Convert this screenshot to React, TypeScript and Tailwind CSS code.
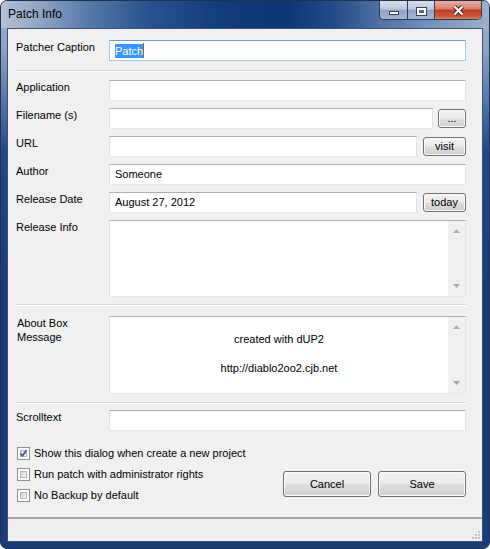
import type { ReactNode } from 'react';

function TextBox({
  className = '',
  focused = false,
  children,
}: {
  className?: string;
  focused?: boolean;
  children?: ReactNode;
}) {
  const border = focused
    ? 'border-[#a6c8e6] border-t-[#6f9ccb]'
    : 'border-[#e2e3ea] border-t-[#abadb3] border-b-[#e3e9ef]';
  return (
    <div className={`flex h-[21px] flex-1 items-center border bg-white pl-[5px] ${border} ${className}`}>
      {children}
    </div>
  );
}

function Button({ className = '', children }: { className?: string; children: ReactNode }) {
  return (
    <div
      className={`flex shrink-0 items-center justify-center rounded-[3px] border border-[#707070] bg-[linear-gradient(180deg,#f2f2f2_0%,#ebebeb_48%,#dddddd_52%,#cfcfcf_100%)] shadow-[inset_0_0_0_1px_#fbfbfb] leading-[13px] ${className}`}
    >
      {children}
    </div>
  );
}

function Row({ label, className = '', children }: { label: ReactNode; className?: string; children: ReactNode }) {
  return (
    <div className={`flex ${className}`}>
      <div className="w-[93px] shrink-0 leading-[14px]">{label}</div>
      <div className="flex flex-1">{children}</div>
    </div>
  );
}

function Separator({ className = '' }: { className?: string }) {
  return <div className={`h-[2px] rounded-full border-t border-b border-t-[#d3d7db] border-b-white ${className}`} />;
}

function ScrollBar() {
  return (
    <div className="flex w-[17px] shrink-0 flex-col items-center justify-between bg-[#f0f0f0] py-[8px]">
      <svg width="7" height="4" viewBox="0 0 7 4">
        <path d="M0 4 L3.5 0 L7 4 Z" fill="#a8a8a8" />
      </svg>
      <svg width="7" height="4" viewBox="0 0 7 4">
        <path d="M0 0 L7 0 L3.5 4 Z" fill="#a8a8a8" />
      </svg>
    </div>
  );
}

function Checkbox({ checked = false, label }: { checked?: boolean; label: string }) {
  return (
    <div className="flex h-[13px] items-center">
      <div className="relative ml-[1px] h-[13px] w-[13px] border border-[#8f8f8f] bg-white p-[2px]">
        <div className="h-full w-full border border-[#b4b8bd] bg-[linear-gradient(135deg,#cdd1d7_0%,#e6e8eb_55%,#f7f8f9_100%)]" />
        {checked && (
          <svg className="absolute left-[1px] top-[1px]" width="9" height="9" viewBox="0 0 9 9">
            <path d="M1.5 4.5 L3.5 6.8 L7.6 1.3" fill="none" stroke="#3e5592" strokeWidth="1.6" />
          </svg>
        )}
      </div>
      <span className="ml-[4px] leading-[13px]">{label}</span>
    </div>
  );
}

export default function App() {
  return (
    <div className="h-[549px] w-[490px] bg-white font-['Liberation_Sans',Arial,sans-serif] text-[11px] text-black">
      <div className="flex h-full flex-col overflow-hidden rounded-[7px] border border-[#22324c] bg-[linear-gradient(180deg,#a3b6ce_0px,#8aa1c1_50px,#5676a6_100px,#234886_150px,#183b78_300px,#1a3c77_549px)]">
        {/* title bar */}
        <div className="flex h-[27px] shrink-0 bg-[linear-gradient(90deg,#b3c2d5_0%,#8ea5c3_8%,#5679a9_18%,#2a5290_30%,#133c7b_45%,#0e3574_58%,#24498a_68%,#5072a4_78%,#7592bc_88%,#9cb1cb_100%)] pl-[7px] pr-[7px]">
          <div className="mt-[6px] text-[12px] leading-[14px] text-black">Patch Info</div>
          <div className="ml-auto flex h-[19px] overflow-hidden rounded-b-[5px] border-x border-b border-[#2c3d59]">
            <div className="flex w-[27px] justify-center bg-[linear-gradient(180deg,#d7e1ed_0%,#b9c8dc_45%,#8fa4c3_52%,#a3b7d2_100%)]">
              <div className="mt-[10px] h-[4px] w-[10px] border border-[#34445e] bg-white" />
            </div>
            <div className="w-[1px] bg-[#2c3d59]" />
            <div className="flex w-[26px] justify-center bg-[linear-gradient(180deg,#d7e1ed_0%,#b9c8dc_45%,#8fa4c3_52%,#a3b7d2_100%)]">
              <svg className="mt-[6px]" width="11" height="9" viewBox="0 0 11 9">
                <rect x="0" y="0" width="11" height="9" fill="#34445e" />
                <rect x="1" y="1" width="9" height="7" fill="#ffffff" />
                <rect x="3" y="3" width="5" height="3" fill="#4f6b93" />
              </svg>
            </div>
            <div className="w-[1px] bg-[#2c3d59]" />
            <div className="flex w-[46px] justify-center bg-[linear-gradient(180deg,#eab0a2_0%,#d98270_42%,#c2401f_52%,#cf5536_85%,#e2876a_100%)]">
              <svg className="mt-[4px]" width="13" height="11" viewBox="0 0 13 11">
                <path d="M2.5 1.5 L10.5 9.5 M10.5 1.5 L2.5 9.5" stroke="#4a2018" strokeWidth="4.2" />
                <path d="M2.5 1.5 L10.5 9.5 M10.5 1.5 L2.5 9.5" stroke="#ffffff" strokeWidth="2.2" />
              </svg>
            </div>
          </div>
        </div>

        {/* client area */}
        <div className="mx-[6px] flex flex-1 flex-col border border-[#3d5474] bg-[#f0f0f0]">
          <div className="flex flex-1 flex-col pl-[8px] pr-[16px] pt-[11px]">
            <Row label="Patcher Caption">
              <TextBox focused>
                <span className="bg-[#3399ff] leading-[14px] text-white">Patch</span>
                <span className="h-[15px] w-[1px] bg-[#b0600a]" />
              </TextBox>
            </Row>
            <Separator className="mt-[9px]" />
            <Row className="mt-[8px]" label="Application">
              <TextBox />
            </Row>
            <Row className="mt-[7px]" label="Filename (s)">
              <TextBox />
              <Button className="ml-[5px] mt-[1px] h-[19px] w-[28px]">...</Button>
            </Row>
            <Row className="mt-[7px]" label="URL">
              <TextBox />
              <Button className="ml-[6px] mt-[1px] h-[19px] w-[43px]">visit</Button>
            </Row>
            <Row className="mt-[7px]" label="Author">
              <TextBox>Someone</TextBox>
            </Row>
            <Row className="mt-[7px]" label="Release Date">
              <TextBox>August 27, 2012</TextBox>
              <Button className="ml-[6px] mt-[1px] h-[19px] w-[43px]">today</Button>
            </Row>
            <Row className="mt-[7px]" label="Release Info">
              <div className="flex h-[77px] flex-1 border border-[#e2e3ea] border-t-[#abadb3] border-b-[#e3e9ef] bg-white">
                <div className="flex-1" />
                <ScrollBar />
              </div>
            </Row>
            <Separator className="mt-[7px]" />
            <Row
              className="mt-[10px]"
              label={
                <div className="pl-[1px]">
                  About Box
                  <br />
                  Message
                </div>
              }
            >
              <div className="flex h-[78px] flex-1 border border-[#e2e3ea] border-t-[#abadb3] border-b-[#e3e9ef] bg-white">
                <div className="flex flex-1 flex-col items-center pt-[15px] leading-[14px]">
                  <div>created with dUP2</div>
                  <div className="mt-[15px]">http://diablo2oo2.cjb.net</div>
                </div>
                <ScrollBar />
              </div>
            </Row>
            <Separator className="mt-[8px]" />
            <Row className="mt-[6px]" label="Scrolltext">
              <TextBox />
            </Row>

            <div className="mt-[16px] flex">
              <div className="flex flex-col gap-[8px]">
                <Checkbox checked label="Show this dialog when create a new project" />
                <Checkbox label="Run patch with administrator rights" />
                <Checkbox label="No Backup by default" />
              </div>
              <div className="ml-auto mt-[24px] flex gap-[7px]">
                <Button className="h-[26px] w-[88px]">Cancel</Button>
                <Button className="h-[26px] w-[88px]">Save</Button>
              </div>
            </div>
          </div>

          {/* status bar */}
          <div className="flex h-[24px] shrink-0 items-end justify-end border-t-2 border-[#a3a3a3] bg-[#efeeed] pb-[1px] pr-[1px]">
            <svg width="12" height="12" viewBox="0 0 12 12">
              <rect x="9" y="3" width="2" height="2" fill="#c4c4c4" />
              <rect x="6" y="6" width="2" height="2" fill="#c4c4c4" />
              <rect x="9" y="6" width="2" height="2" fill="#c4c4c4" />
              <rect x="3" y="9" width="2" height="2" fill="#c4c4c4" />
              <rect x="6" y="9" width="2" height="2" fill="#c4c4c4" />
              <rect x="9" y="9" width="2" height="2" fill="#c4c4c4" />
            </svg>
          </div>
        </div>
        <div className="h-[6px] shrink-0" />
      </div>
    </div>
  );
}
